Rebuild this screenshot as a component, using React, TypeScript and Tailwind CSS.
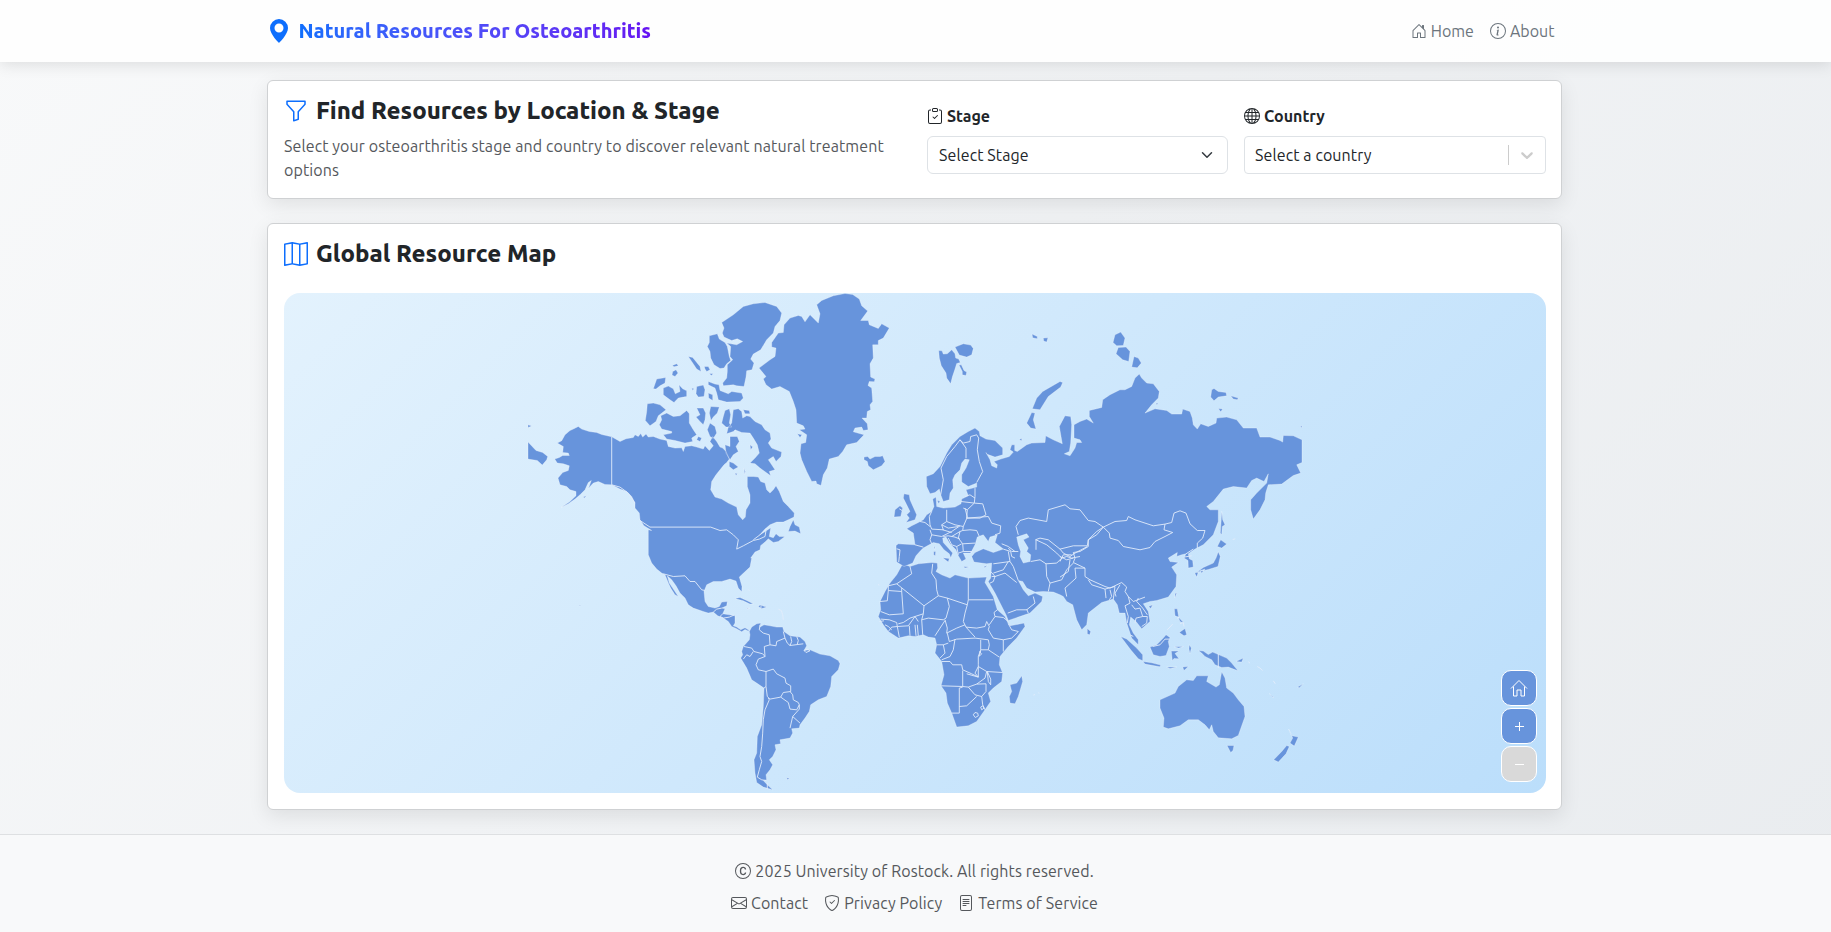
import type { ReactNode } from "react";
import {
  BsCCircle,
  BsClipboardCheck,
  BsEnvelope,
  BsFileText,
  BsFunnel,
  BsGeoAltFill,
  BsGlobe,
  BsHouseDoor,
  BsInfoCircle,
  BsMap,
  BsShieldCheck,
} from "react-icons/bs";

type Tile = [number, number];
type Part = [Tile, string];

// Origins of the map tiles; tile coordinates are three units per pixel.
const AMN: Tile = [520, 290];
const GRL: Tile = [740, 290];
const SVA: Tile = [920, 330];
const EUR: Tile = [880, 400];
const SIB: Tile = [1000, 310];
const SEA: Tile = [1060, 480];
const AMS: Tile = [570, 540];
const AFR: Tile = [860, 550];

const points = ([[ox, oy], raw]: Part) =>
  raw
    .trim()
    .split(/\s+/)
    .map((p) => {
      const [x, y] = p.split(",").map(Number);
      return `${(ox + x / 3).toFixed(1)},${(oy + y / 3).toFixed(1)}`;
    })
    .join(" ");

const area = (...parts: Part[]) => `M${parts.map(points).join(" ")}Z`;
const areas = (tile: Tile, list: string[]) => list.map((s) => area([tile, s])).join("");
const lines = (tile: Tile, list: string[]) => list.map((s) => `M${points([tile, s])}`).join("");

const NORTH_AMERICA =
  area(
    [
      AMN,
      "175,410 185,418 208,425 230,428 245,434 275,441 300,455 318,447 340,443 345,435 355,440 362,431 368,442 378,433 385,442 400,440 420,448 440,452 445,470 465,475 485,474 490,485 495,470 515,468 530,472 550,478 555,468 568,482 580,468 570,455 578,440 590,455 600,472 608,475 618,485 628,508 620,518 612,525 600,540 588,555 575,575 572,600 585,622 605,628 625,640 650,652 655,675 668,690 676,682 678,660 690,640 690,615 682,590 682,560 700,560 715,562 722,575 735,580 740,600 750,610 760,600 768,588 778,605 790,635 805,650 823,670 822,682 805,690 790,697 770,697 750,705 735,718 720,735 740,722 752,714 748,740 760,744 768,732 778,740 795,740 775,755 760,758 745,747 735,757 722,767 720,780 705,787 692,805",
    ],
    [
      AMS,
      "545,55 540,82 515,105 508,112 516,140 515,156 505,145 498,124 480,118 455,125 430,125 410,135 402,155 405,185 415,200 435,205 448,200 455,187 472,185 470,198 455,205 465,207 458,222 478,225 495,228 495,250 490,258 500,262 512,270 525,264 535,270 538,275 525,269 515,276 500,267 485,260 475,245 460,235 443,228 430,217 415,220 400,215 370,205 355,195 345,175 330,160 318,138 305,120 292,108 298,130 310,148 325,170 315,165 302,145 296,132 285,105 275,100 260,88 245,70 235,45",
    ],
    [
      AMN,
      "385,720 395,722 372,708 360,690 358,670 345,655 345,640 335,620 320,605 300,598 275,585 255,584 235,575 220,580 210,590 205,597 214,572 205,578 195,600 180,615 165,628 145,642 123,653 150,635 168,618 168,605 150,600 140,590 120,585 114,565 128,548 145,542 148,528 130,522 112,520 104,508 118,503 128,497 148,497 145,490 128,488 130,470 112,460 125,453 135,435 150,422 160,418",
    ],
  ) +
  areas(AMN, [
    "820,690 825,705 838,712 842,732 825,724 805,725 810,710",
    "24,457 48,482 68,488 83,500 80,510 67,526 52,512 24,508",
    "24,405 35,409 24,413",
    "605,98 640,75 670,50 700,42 735,38 770,50 785,70 780,92 765,110 760,130 740,150 722,180 700,193 692,208 702,220 696,240 680,243 678,262 672,290 650,288 640,285 610,288 608,280 620,265 622,245 622,225 638,210 630,200 632,170 620,160 650,165 668,155 652,147 635,152 612,142 607,130 612,115",
    "568,138 592,132 598,148 615,158 622,170 628,200 632,212 620,222 612,235 600,236 582,225 572,205 570,185 562,170 568,158",
    "505,200 518,203 540,230 543,245 530,238 515,215",
    "553,230 565,230 570,240 560,245 555,238",
    "568,251 580,252 574,257",
    "457,227 470,222 475,228 462,231",
    "458,245 468,240 474,250 465,260 456,256",
    "410,268 437,263 435,280 420,288 408,298 400,297",
    "430,295 445,289 460,297 466,312 480,305 477,285 488,297 500,303 500,320 490,322 475,325 462,338 450,330 430,315",
    "530,290 550,286 555,300 552,320 535,322 528,312",
    "565,310 578,315 578,332 566,325",
    "515,295 522,297 518,302",
    "565,275 585,283 597,285 600,302 625,312 635,305 665,310 670,325 660,335 620,337 595,330 590,310 585,295 565,285",
    "382,342 400,340 420,345 438,360 415,378 408,395 390,408 376,392 380,365",
    "440,370 460,380 480,378 500,362 508,372 508,400 520,420 530,435 515,445 518,455 495,460 465,452 440,448 430,435 455,430 455,425 425,418 418,405 425,390 422,378",
    "530,355 550,355 557,370 555,390 550,405 540,395 528,382 540,375",
    "572,350 598,352 592,370 580,382 573,392 568,370",
    "570,400 585,410 590,430 580,446 570,440 562,420",
    "535,440 545,445 540,455 530,450",
    "640,360 655,357 665,365 668,385 680,378 690,380 705,395 725,405 735,420 750,430 753,448 745,460 755,475 785,487 783,500 768,515 760,500 745,510 755,525 765,540 748,545 752,558 720,535 705,522 690,520 705,505 718,490 712,465 700,445 690,430 665,428 645,420 640,425 620,432 625,412 635,400",
    "615,362 628,357 632,375 628,400 635,412 618,412 605,400 610,380",
    "670,360 688,362 690,372 675,372",
    "630,440 652,440 658,455 648,470 655,485 640,495 630,510 618,490 615,465 630,470",
    "628,515 640,520 655,532 640,540 628,530",
    "690,465 698,472 692,480",
    "645,550 652,552 648,557",
    "672,535 676,545 674,554",
    "190,622 200,617 193,625",
  ]) +
  areas(AMS, [
    "495,176 510,173 530,182 550,192 540,193 520,183",
    "565,200 570,196 590,202 575,206",
    "530,204 538,206 532,208",
    "29,195 32,197 29,199",
    "650,714 660,716 652,719",
  ]);

const GREENLAND = areas(GRL, [
  "230,45 245,32 280,18 315,11 338,14 358,28 365,48 383,64 362,92 385,92 388,105 415,116 425,102 448,115 430,145 415,152 415,165 398,165 400,205 390,222 392,262 405,268 403,276 388,275 384,287 395,295 398,335 390,345 392,360 382,365 380,385 366,385 382,402 384,420 370,422 365,412 345,415 340,426 372,435 350,458 320,465 308,485 295,500 268,508 262,535 250,555 243,587 230,582 228,574 215,575 200,545 185,510 180,490 183,462 197,458 200,435 178,420 195,418 190,408 170,400 168,360 160,335 148,305 120,290 95,298 78,285 70,268 78,260 57,235 90,210 105,200 108,175 95,172 95,158 115,130 130,128 132,105 150,85 175,77 185,80 195,96 210,75 235,100 240,72",
  "372,502 383,500 390,508 405,500 420,500 428,498 435,515 425,528 400,540 385,528 382,515 372,510",
  "172,432 186,435 180,443",
]);

const SOUTH_AMERICA = areas(AMS, [
  "538,275 545,262 560,252 572,250 570,262 582,255 600,258 620,262 638,262 642,275 660,288 690,292 705,305 710,318 702,332 720,330 750,343 780,348 805,362 810,372 805,390 785,410 782,440 770,470 745,480 722,495 718,515 705,535 690,555 688,565 665,567 668,580 660,595 630,600 632,612 615,615 618,630 608,650 598,660 608,675 600,690 588,705 590,720 580,722 592,735 608,750 580,742 560,728 555,700 552,660 560,640 562,590 575,555 580,500 582,445 560,430 545,420 530,385 512,355 518,345 515,335 520,320 538,300 540,285",
]);

const EURASIA = area(
  [
    EUR,
    "139,230 160,222 180,200 200,160 215,135 240,110 265,95 285,85 298,95 300,108 318,118 345,122 368,145 368,165 345,172 320,163 318,158 330,180 335,198 350,205 352,195 342,185 362,178 388,170 400,157 390,150 395,135 404,135 404,152 412,155 440,135 455,130 495,128",
  ],
  [
    SIB,
    "137,378 160,390 187,402 178,350 195,318 212,320 215,345 212,400 208,425 193,432 210,438 225,415 230,398 245,398 240,390 222,385 222,345 240,335 260,328 280,340 268,320 268,302 305,293 308,270 330,255 360,240 375,240 395,230 405,205 418,193 425,205 440,220 460,222 478,245 475,265 455,285 435,310 465,297 500,302 515,313 545,313 548,298 570,305 577,325 580,345 592,358 602,342 625,350 648,340 650,325 680,322 710,330 730,355 770,355 780,382 810,382 840,392 848,397 850,377 880,378 906,390 906,458 890,465 902,490 880,497 845,523 805,525 797,550 795,570 780,600 760,628 752,600 752,570 770,550 800,520 805,492 792,515 770,505 755,512 740,535 700,530 670,538 640,575 620,590 630,600 655,600",
  ],
  [
    SEA,
    "475,95 475,125 460,165 430,195 405,208 385,222 388,237 398,242 400,262 385,265 384,242 372,235 378,222 365,225 350,230 352,218 325,235 330,245 355,248 335,262 350,285 348,320 325,352 290,362 270,365 250,372 265,395 270,425 245,447 228,425 212,412 208,435 220,460 235,480 235,495 215,475 200,430 195,400 178,400 172,375 160,358 125,368 85,400 80,435 65,450 50,420 38,375 20,365 10,350 0,345",
  ],
  [
    EUR,
    "520,577 490,575 465,577 440,565 428,545 415,542 430,570 445,588 465,580 488,590 485,605 450,640 385,662 378,645 345,580 325,545 332,535 335,490 320,492 282,487 275,470 285,458 310,447 340,458 370,448 345,428 352,405 330,412 325,425 310,405 292,412 285,435 272,460 250,460 258,478 245,485 235,468 228,450 210,432 198,412 188,415 190,428 205,445 218,460 212,474 208,462 192,450 178,432 160,428 130,445 122,452 108,468 98,490 72,500 50,487 48,437 55,432 105,435 100,400 80,387 95,378 115,368 130,360 140,345 155,335 162,320 158,298 168,292 170,320 190,325 225,322 243,312 245,298 265,288 258,270 290,262 290,250 265,260 245,247 245,225 258,205 268,180 255,178 245,190 240,210 225,225 218,240 220,265 210,280 208,300 190,305 182,285 178,268 165,278 150,282 140,260",
  ],
);

const EURASIA_WATER = area([
  EUR,
  "410,412 440,402 447,412 430,420 445,445 440,455 452,465 450,485 430,490 420,470 422,455 415,435",
]);

const EURASIA_ISLANDS =
  areas(SVA, [
    "56,62 66,63 70,73 82,72 95,60 105,72 107,85 116,88 121,98 110,101 105,118 97,142 92,162 80,145 78,130 64,108 58,85",
    "105,52 130,42 152,46 160,56 155,75 140,82 118,76",
    "117,106 124,105 132,122 140,127 138,137 127,135 127,125",
  ]) +
  areas(EUR, [
    "72,282 88,285 90,300 110,345 105,360 78,368 88,355 80,345 90,335 80,315 70,295",
    "45,330 60,318 68,325 62,350 42,352",
    "418,118 426,117 424,124",
    "172,302 180,304 176,312",
    "188,474 208,476 205,487",
    "162,440 165,442 164,450",
    "161,455 167,455 166,468 161,466",
    "250,500 268,502 255,505",
    "312,500 322,497 314,504",
  ]) +
  areas(SIB, [
    "180,215 188,218 182,232 145,260 120,300 97,297 110,265 128,245",
    "95,308 105,310 100,330 108,358 92,355 80,340",
    "345,75 362,67 375,85 370,107 350,108 339,98",
    "355,113 378,112 390,125 386,155 368,150 348,132",
    "402,140 415,145 424,160 412,174 395,172",
    "96,73 112,80 112,87 98,84",
    "130,85 144,84 140,97 131,94",
    "635,240 642,236 655,245 678,248 680,258 655,262 642,273 632,262",
    "692,258 715,265 712,270 700,268",
    "655,296 668,298 662,306",
    "901,350 906,348 905,354",
    "468,280 475,281 470,285",
  ]) +
  areas(SEA, [
    "485,95 488,120 495,135 487,140 485,165 481,160 483,130",
    "482,180 500,193 485,205 472,200",
    "475,216 481,230 474,260 445,269 412,277 430,263 460,250 468,235",
    "420,273 435,268 425,280",
    "404,280 415,277 410,292",
    "345,342 350,338 345,355",
    "266,380 278,375 272,386",
    "82,446 92,455 89,465 82,463",
    "182,470 200,478 230,505 248,525 248,543 235,537 212,510",
    "249,545 275,549 302,556 300,561 255,553",
    "270,502 290,495 310,475 318,465 330,473 325,485 328,500 318,527 300,530 280,525",
    "334,514 357,514 345,521 357,537 342,536 337,542",
    "343,387 352,387 356,412 345,408",
    "358,458 375,446 380,465 372,468",
    "355,412 372,430 360,425",
    "368,562 385,560 372,572",
    "320,562 350,562 330,566",
    "343,501 370,500 356,505",
    "388,495 394,505 390,522 387,508",
    "415,512 430,514 445,524 458,517 500,535 515,550 534,573 505,562 485,563 465,555 455,540 435,530 425,520",
    "528,545 550,535 545,547",
    "300,660 345,640 355,620 380,600 400,602 410,588 445,588 440,605 468,622 478,615 485,576 495,595 500,625 520,640 535,660 552,680 555,710 535,767 515,777 475,774 460,755 455,735 448,750 435,735 415,720 385,720 360,738 325,747 310,742 312,715 300,685",
    "501,797 522,797 519,812 512,818",
    "686,748 696,768 715,772 703,799 690,790 698,775",
    "680,797 688,800 678,822 655,847 641,840 665,815",
    "628,642 642,653 638,652",
    "713,622 730,612 718,624",
  ]);

const AFRICA = areas(AFR, [
  "128,42 150,50 175,42 215,38 232,40 233,55 228,65 245,75 270,85 285,75 325,85 380,82 375,98 385,115 400,140 412,180 435,200 445,222 450,228 492,220 495,230 470,265 445,290 420,320 418,345 428,370 425,395 400,415 385,430 392,455 375,480 350,515 325,528 290,532 275,490 262,460 258,430 243,408 252,375 245,335 225,310 230,285 225,265 205,262 190,255 165,260 145,258 115,265 85,245 70,225 55,200 62,180 60,155 75,125 90,100 110,75",
  "485,378 488,395 475,440 465,462 450,460 448,440 455,425 450,405 470,400",
]);

const BORDERS =
  lines(AMN, [
    "275,441 275,585 300,592 325,610 345,640",
    "360,692 390,712 572,712 600,722 620,720 640,735 655,750 650,778 670,768 700,752 718,748 735,740 738,722",
    "700,750 720,735 740,715",
  ]) +
  lines(AMS, [
    "280,102 310,110 345,108 360,125 375,125 395,150 405,152",
    "430,217 440,208 455,205",
    "458,222 450,230 460,235 478,232 492,226",
    "570,255 568,270 580,280 598,285 600,315",
    "600,315 618,318 620,305 645,295 640,275",
    "645,295 652,310 660,317 700,312",
    "662,290 665,305 660,317",
    "680,290 685,302 682,313",
    "600,315 583,320 585,350",
    "522,320 545,325 552,335 578,342 585,350",
    "550,335 540,350 530,345 520,358",
    "585,350 565,358 558,375 565,390 588,395",
    "588,395 610,388 620,402 645,415 648,430 662,438 662,455 640,458 632,472 600,478 592,470 588,440 588,395",
    "588,440 582,445",
    "632,472 655,488 660,508 680,510 688,495 685,488 670,480 668,465 660,455",
    "688,495 688,508 668,530 690,550",
    "668,530 660,565",
    "595,475 598,480 585,510 580,540 578,580 575,620 570,650 575,665 568,690 562,712 575,720 588,722",
    "592,730 592,748",
    "702,332 712,328 720,333 708,338 702,332",
    "532,206 540,205",
    "573,197 573,205",
    "625,208 634,212 638,225 640,240",
    "535,149 538,153",
  ]) +
  lines(AFR, [
    "150,50 155,72 110,102 85,108 85,122",
    "110,102 192,168 235,138 230,120 228,90 215,70 218,42",
    "125,115 125,125 130,192 88,195 62,185",
    "60,155 82,153 85,122 125,125",
    "192,168 190,192 150,205 130,218 115,222",
    "190,192 185,210 205,205 250,210 258,205 268,170 262,145 235,138",
    "262,145 322,165 315,190 310,215 318,232",
    "325,85 325,150 400,150",
    "325,150 322,165",
    "255,210 262,235 260,250 290,235 315,225",
    "262,250 268,275 290,268 345,265 385,270",
    "318,232 345,262",
    "318,232 350,235 375,230 380,215 388,230 385,240 400,265 430,270 455,265 475,245 455,240 445,222",
    "388,225 405,200 402,188 412,180",
    "405,200 430,203 445,215",
    "430,270 430,305",
    "385,270 388,285 385,300 418,322",
    "362,270 362,300 385,300",
    "285,268 280,300 270,320 245,330",
    "362,300 355,320 355,345 355,350 345,370 355,382 335,372 308,360 305,345 278,345 270,335 245,335",
    "357,305 365,312 357,320 362,303",
    "308,362 308,410 243,408",
    "320,372 355,382 355,350 380,365 428,368",
    "308,410 325,412 350,403 375,385 380,365",
    "382,365 392,388 392,405 385,395 382,365",
    "325,412 345,435 365,440 378,425 378,402 350,403",
    "308,412 298,415 298,490 275,490",
    "298,470 320,468 350,440",
    "365,440 368,465 375,480",
    "340,495 345,488 353,490 355,498 346,503 340,495",
    "362,472 368,468 372,475 365,480 362,472",
    "230,285 250,285 265,280",
    "250,285 255,310 240,325",
    "225,258 240,235 255,212",
    "185,210 188,255",
    "172,225 175,258",
    "148,228 150,258",
    "165,225 168,258",
    "112,230 118,262",
    "85,245 95,232 112,230 145,228 165,200 175,215",
    "75,225 85,230 95,240",
    "62,208 88,210 110,218 112,230",
    "58,215 72,213",
    "443,190 470,180 500,180 525,160 520,140",
    "505,190 500,178",
    "520,436 525,434",
    "535,429 538,430",
    "54,104 58,106",
  ]) +
  lines(EUR, [
    "182,285 190,240 183,205 200,170 225,140 240,120 258,145 258,175",
    "240,120 250,130 270,125 272,110 290,105 296,115 292,150 298,185 308,215 290,248",
    "285,265 285,290 283,310 308,312 318,345 300,355 260,355 262,330 283,310",
    "255,290 270,285 285,295",
    "243,305 283,310",
    "250,325 262,330",
    "200,330 200,365 225,375 250,380 262,352 255,325",
    "155,335 148,350 150,375 155,388 190,390 185,375 200,365",
    "120,365 135,368 150,380",
    "150,390 155,405 150,420 155,432",
    "155,405 185,410 215,395 240,378",
    "185,375 205,385 235,380",
    "188,390 215,398",
    "105,435 130,442",
    "50,447 60,450 58,470 56,487",
    "250,380 248,392 270,390 290,392 298,410",
    "260,355 325,350 335,370 362,378 360,400 345,405",
    "215,410 240,395 248,392",
    "240,395 235,415 248,432 285,430",
    "190,410 205,408 225,412 240,418",
    "205,415 215,435 230,440 245,432",
    "230,440 235,465",
    "248,432 250,455 275,455",
    "235,460 250,455",
    "272,460 278,452",
    "365,432 385,440 405,455",
    "370,448 392,455 395,470 405,475",
    "385,445 395,455 415,455",
    "385,455 390,485 340,492",
    "390,485 400,500 415,542",
    "385,485 370,510 340,520",
    "332,515 345,530 375,520 410,548",
    "335,530 345,530 340,545 330,550",
    "452,485 480,480 498,492 500,530 510,550 505,575",
    "510,550 545,540 560,510 580,490",
    "468,450 468,420 500,435 530,460 545,475 530,490 498,492",
    "545,475 560,470 575,475 600,470",
    "58,327 66,332",
    "58,229 61,230",
  ]) +
  lines(SIB, [
    "55,675 48,650 60,632 85,625 140,635 145,600 195,585 210,597 240,600 265,632 285,635 310,652",
    "310,652 290,665 265,690 262,708 220,708 180,718 145,690 120,685 106,690",
    "180,718 190,730 210,740 225,730 262,710",
    "180,755 190,735 215,735",
  ]) +
  lines(SEA, [
    "130,142 165,125 200,122 205,110 225,120 280,138 315,133 312,150 338,158 315,170 285,185 270,203 240,210 190,200 175,182 150,175 148,160 130,142",
    "315,133 335,128 342,100 360,93 378,100 390,132 412,152 435,152 428,175 412,190 412,205",
    "85,200 60,215 40,218 45,235 40,248 75,265 75,290 90,300 135,320 150,325 185,308 200,322 195,335 205,350 220,365 255,352",
    "130,142 110,165 85,180 85,200",
    "0,230 20,240 40,235",
    "85,300 95,315 135,328 138,355",
    "135,328 165,320 160,358",
    "150,330 155,350 148,360",
    "180,315 165,340 168,350",
    "75,265 45,265 48,295 15,325 20,350",
    "30,240 25,275 0,292",
    "205,350 210,370 195,378 205,410 202,430",
    "215,375 225,388 240,385 248,410 228,415 225,430",
    "248,410 262,410 260,430 245,440",
    "235,355 230,365 248,385 262,405",
    "372,232 395,228",
    "378,222 400,208",
    "475,522 475,565",
    "278,500 300,495 315,478 328,478",
    "212,466 220,470",
    "322,450 338,433",
    "352,415 358,412",
    "360,432 370,428 372,440",
    "592,560 600,565 608,572",
    "640,603 646,612",
    "518,179 526,177",
    "565,546 570,550",
  ]);

function Header() {
  return (
    <header className="relative z-10 h-[62px] bg-white/90 pr-px shadow-[0_2px_15px_rgba(0,0,0,0.12)]">
      <div className="mx-auto flex h-full w-[1319px] items-center justify-between px-3">
        <div className="flex items-center">
          <BsGeoAltFill className="-ml-px size-6 text-[#0d6efd]" />
          <span className="ml-2 bg-gradient-to-r from-[#0d6efd] to-[#6610f2] bg-clip-text text-[20px] font-extrabold text-transparent">
            Natural Resources For Osteoarthritis
          </span>
        </div>
        <nav className="flex gap-4 pr-2 text-[#6c757d]">
          <IconLabel icon={<BsHouseDoor />}>Home</IconLabel>
          <IconLabel icon={<BsInfoCircle />}>About</IconLabel>
        </nav>
      </div>
    </header>
  );
}

function IconLabel({ icon, children }: { icon: ReactNode; children: ReactNode }) {
  return (
    <span className="flex items-center gap-1 whitespace-nowrap">
      {icon}
      <span>{children}</span>
    </span>
  );
}

const CARD =
  "rounded-md border border-[#cfd1d3] bg-white pr-[15px] pl-4 shadow-[0_6px_20px_rgba(0,0,0,0.09)]";

function Filters() {
  return (
    <section className={`${CARD} flex h-[119px]`}>
      <div className="w-[643px] pt-[14px]">
        <h2 className="flex items-center text-[24px] leading-[32px] font-extrabold">
          <BsFunnel className="mr-2 size-6 text-[#0d6efd]" />
          Find Resources by Location &amp; Stage
        </h2>
        <p className="mt-[7px] w-[620px] tracking-[0.1px] text-[#55585c]">
          Select your osteoarthritis stage and country to discover relevant natural treatment options
        </p>
      </div>
      <div className="flex grow gap-4 pt-[23px]">
        <div className="w-[301px]">
          <div className="font-bold">
            <IconLabel icon={<BsClipboardCheck />}>Stage</IconLabel>
          </div>
          <div className="mt-2 flex h-[38px] items-center justify-between rounded-md border border-[#dee2e6] pr-[14px] pl-[11px] tracking-[0.1px]">
            Select Stage
            <svg viewBox="0 0 16 16" className="size-3 text-[#343a40]" fill="none" stroke="currentColor" strokeWidth="2" strokeLinecap="round" strokeLinejoin="round">
              <path d="m2 5 6 6 6-6" />
            </svg>
          </div>
        </div>
        <div className="w-[302px]">
          <div className="font-bold">
            <IconLabel icon={<BsGlobe />}>Country</IconLabel>
          </div>
          <div className="mt-2 flex h-[38px] items-center rounded border border-[#dee2e6] pl-[10px] tracking-[0.1px]">
            <span className="grow">Select a country</span>
            <span className="h-5 w-px bg-[#cccccc]" />
            <svg viewBox="0 0 20 20" className="mx-2 size-5 fill-[#cccccc]">
              <path d="M4.516 7.548c0.436-0.446 1.043-0.481 1.576 0l3.908 3.747 3.908-3.747c0.533-0.481 1.141-0.446 1.574 0 0.436 0.445 0.408 1.197 0 1.615-0.406 0.418-4.695 4.502-4.695 4.502-0.217 0.223-0.502 0.335-0.787 0.335s-0.57-0.112-0.789-0.335c0 0-4.287-4.084-4.695-4.502s-0.436-1.17 0-1.615z" />
            </svg>
          </div>
        </div>
      </div>
    </section>
  );
}

function WorldMap() {
  return (
    <svg viewBox="284 293.2 1262 500" className="h-full w-full">
      <g fill="#6794dc" stroke="#ffffff" strokeWidth="0.3" strokeLinejoin="round" fillRule="evenodd">
        <path d={NORTH_AMERICA} fillRule="nonzero" />
        <path d={GREENLAND} />
        <path d={SOUTH_AMERICA} />
        <path d={AFRICA} />
        <path d={EURASIA + EURASIA_WATER} />
        <path d={EURASIA_ISLANDS} />
      </g>
      <path d={BORDERS} fill="none" stroke="#e2ecfa" strokeWidth="0.9" strokeLinejoin="round" />
    </svg>
  );
}

function MapControls() {
  const base = "flex size-[36px] items-center justify-center rounded-[10px] border text-white";
  return (
    <div className="absolute right-[9px] bottom-[11px] flex flex-col gap-[2px]">
      <button className={`${base} border-white bg-[#6794dc]`}>
        <svg viewBox="0 0 18 18" className="size-[18px]" fill="none" stroke="currentColor">
          <path d="M1 9.5 9 1.5l8 8M3.5 7.5V17H7v-6h4v6h3.500V7.500" />
        </svg>
      </button>
      <button className={`${base} border-white bg-[#6794dc]`}>
        <svg viewBox="0 0 9 9" className="size-[9px]" stroke="currentColor">
          <path d="M0 4.500h9M4.500 0v9" />
        </svg>
      </button>
      <button className={`${base} border-white bg-[#d9d9d9]`}>
        <svg viewBox="0 0 9 9" className="size-[9px]" stroke="currentColor">
          <path d="M0 4.500h9" />
        </svg>
      </button>
    </div>
  );
}

export default function App() {
  return (
    <div className="flex h-[932px] flex-col bg-[linear-gradient(135deg,#f8f9fa_0%,#e9ecef_100%)] font-['Ubuntu','Noto_Sans',sans-serif] text-[16px] leading-6 text-[#212529]">
      <Header />
      <div className="flex grow pr-[2px]">
        <main className="mx-auto flex w-[1295px] flex-col gap-6 pt-[18px]">
          <Filters />
          <section className={`${CARD} h-[587px]`}>
            <h2 className="flex h-[69px] items-center pb-[9px] text-[24px] leading-[32px] font-extrabold">
              <BsMap className="mr-2 size-6 text-[#0d6efd]" />
              Global Resource Map
            </h2>
            <div className="relative h-[500px] overflow-hidden rounded-2xl bg-[linear-gradient(135deg,#e3f2fd_0%,#bbdefb_100%)]">
              <WorldMap />
              <MapControls />
            </div>
          </section>
        </main>
      </div>
      <footer className="relative flex h-[98px] flex-col items-center gap-2 border-t border-[#dee0e2] bg-[#f8f9fa] pt-6 pr-[2px] tracking-[0.1px] text-[#55585c]">
        <IconLabel icon={<BsCCircle />}>2025 University of Rostock. All rights reserved.</IconLabel>
        <div className="flex gap-4">
          <IconLabel icon={<BsEnvelope />}>Contact</IconLabel>
          <IconLabel icon={<BsShieldCheck />}>Privacy Policy</IconLabel>
          <IconLabel icon={<BsFileText />}>Terms of Service</IconLabel>
        </div>
      </footer>
    </div>
  );
}
